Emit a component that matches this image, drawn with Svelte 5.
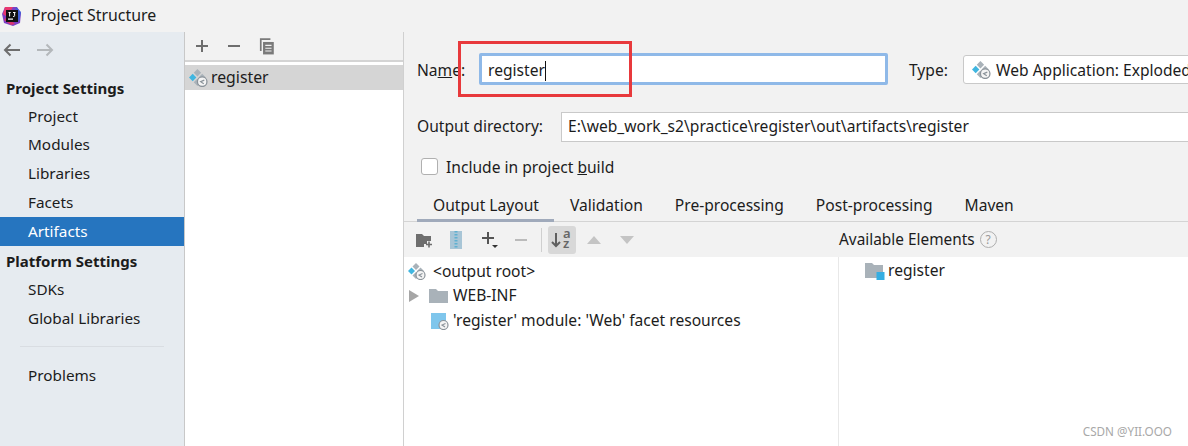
<script>
  const nav1 = ['Project', 'Modules', 'Libraries', 'Facets', 'Artifacts'];
  const nav2 = ['SDKs', 'Global Libraries'];
  const tabs = ['Output Layout', 'Validation', 'Pre-processing', 'Post-processing', 'Maven'];
</script>

{#snippet artifact(size)}
  <svg class="ico" width={size} height={size} viewBox="0 0 18 18">
    <path d="M8 1l3.5 3.5L8 8 4.500 4.500z" fill="#a9b2b9"/>
    <path d="M3.500 5.500L7 9l-3.500 3.500L0 9z" fill="#40b6e0"/>
    <path d="M8 10l3.500 3.500L8 17l-3.500-3.500z" fill="#a9b2b9"/>
    <path d="M12.500 5.500L16 9l-3.500 3.500L9 9z" fill="#a9b2b9"/>
    <circle cx="12.500" cy="13" r="4.500" fill="#f4f4f4" stroke="#8a9299" stroke-width="1.200"/>
    <path d="M14.500 11.500L11 13l3 2" fill="none" stroke="#8a9299" stroke-width="1.100"/>
  </svg>
{/snippet}

<div class="win">
  <header class="title">
    <svg class="logo" width="22" height="22" viewBox="0 0 22 22">
      <path d="M4 2h12l4 6-1 10-7 3-9-3-2-9z" fill="#7c3fc4"/>
      <path d="M2 9l2-7h8L6 12z" fill="#e9386f"/>
      <path d="M3 15l7 5 4-1-8-8z" fill="#d9336f"/>
      <path d="M15 2l5 5-2 10-4-9z" fill="#3f5fd8"/>
      <rect x="5" y="5" width="12" height="12" fill="#111"/>
      <rect x="7" y="13.500" width="5" height="1.200" fill="#fff"/>
      <path d="M7.500 7.500h2.200M8.600 7.500v4M12 7.500h2.500M13.600 7.500v3.200q0 1-1.500 .8" fill="none" stroke="#fff" stroke-width="1"/>
    </svg>
    <span class="title-text">Project Structure</span>
  </header>

  <div class="body">
    <aside class="side">
      <div class="arrows">
        <svg width="20" height="16" viewBox="0 0 20 16"><path d="M18 8H3M8.500 2.500L3 8l5.500 5.500" fill="none" stroke="#6e6e6e" stroke-width="2"/></svg>
        <svg width="20" height="16" viewBox="0 0 20 16"><path d="M2 8h15M11.500 2.500L17 8l-5.500 5.500" fill="none" stroke="#b4b8bb" stroke-width="2"/></svg>
      </div>
      <div class="head first">Project Settings</div>
      {#each nav1 as n}
        <div class="item" class:sel={n === 'Artifacts'}>{n}</div>
      {/each}
      <div class="head second">Platform Settings</div>
      {#each nav2 as n}
        <div class="item">{n}</div>
      {/each}
      <div class="sep"></div>
      <div class="item">Problems</div>
    </aside>

    <section class="list">
      <div class="list-bar">
        <svg width="16" height="16" viewBox="0 0 16 16"><path d="M8 2v12M2 8h12" stroke="#6e6e6e" stroke-width="2"/></svg>
        <svg width="16" height="16" viewBox="0 0 16 16"><path d="M2 8h12" stroke="#6e6e6e" stroke-width="2"/></svg>
        <svg class="copy" width="16" height="17" viewBox="3.500 1.500 13 15"><path d="M4.500 13V2.500H13" fill="none" stroke="#7a7a7a" stroke-width="1.500"/><path d="M6.500 5h9.500v11H6.500z" fill="#7a7a7a"/><path d="M8.500 8h5.500M8.500 10.500h5.500M8.500 13h5.500" stroke="#f2f2f2"/></svg>
      </div>
      <div class="list-row">{@render artifact(19)}<span>register</span></div>
    </section>

    <main class="main">
      <div class="row name-row">
        <label class="lbl" for="nm">Na<u>m</u>e:</label>
        <div class="name-input" id="nm">register<i class="caret"></i></div>
        <span class="lbl type-lbl">Type:</span>
        <div class="combo">{@render artifact(19)}<span>Web Application: Exploded</span></div>
      </div>
      <div class="row out-row">
        <span class="lbl">Output directory:</span>
        <div class="out-input">E:\web_work_s2\practice\register\out\artifacts\register</div>
      </div>
      <div class="row check-row">
        <span class="check"></span>
        <span class="lbl check-lbl">Include in project <u>b</u>uild</span>
      </div>
      <nav class="tabs">
        {#each tabs as t, i}
          <span class="tab" class:on={i === 0}>{t}</span>
        {/each}
      </nav>
      <div class="bar">
        <div class="bar-left">
          <svg width="18" height="18" viewBox="0 0 18 18"><path d="M1 3h6l2 2h7v5h-4v3H9v3H1z" fill="#6e6e6e"/><path d="M14 10.500v6M11 13.500h6" stroke="#6e6e6e" stroke-width="1.600"/></svg>
          <svg class="m-zip" width="14" height="20" viewBox="0 0 14 20"><rect x="1" y="1" width="12" height="18" fill="#a8c5d6"/><path d="M7 1v18" stroke="#5fb0d0" stroke-width="3" stroke-dasharray="1.500 1.500"/></svg>
          <svg class="m-plus" width="20" height="20" viewBox="0 0 20 20"><path d="M7 2v12M1 8h12" stroke="#555" stroke-width="2"/><path d="M11 15h6l-3 3z" fill="#333"/></svg>
          <svg class="m-minus" width="14" height="14" viewBox="0 0 14 14"><path d="M1 7h12" stroke="#bbb" stroke-width="2"/></svg>
          <span class="vsep"></span>
          <span class="sort">
            <svg width="20" height="20" viewBox="0 0 20 20"><path d="M8 3v13M4 12l4 4 4-4" fill="none" stroke="#5f5f5f" stroke-width="2"/></svg>
            <span class="az">a<br/>z</span>
          </span>
          <svg class="m-up" width="16" height="10" viewBox="0 0 16 10"><path d="M8 1l7 8H1z" fill="#c4c4c4"/></svg>
          <svg class="m-down" width="16" height="10" viewBox="0 0 16 10"><path d="M8 9L1 1h14z" fill="#c4c4c4"/></svg>
        </div>
        <div class="bar-right">
          <span>Available Elements</span>
          <span class="help">?</span>
        </div>
      </div>
      <div class="panes">
        <div class="tree">
          <div class="tree-row r1">{@render artifact(18)}<span>&lt;output root&gt;</span></div>
          <div class="tree-row r2">
            <svg width="10" height="12" viewBox="0 0 10 12"><path d="M0 0l10 6-10 6z" fill="#a6a6a6"/></svg>
            <svg class="fold" width="19" height="15" viewBox="0 0 19 15"><path d="M0 1h7l2 2h10v12H0z" fill="#a9b2b9"/></svg>
            <span>WEB-INF</span>
          </div>
          <div class="tree-row r3">
            <svg width="18" height="18" viewBox="0 0 18 18"><path d="M0 1h15v10l-4 6H0z" fill="#7fc6ec"/><circle cx="12.500" cy="13" r="4.500" fill="#f4f4f4" stroke="#8a9299" stroke-width="1.200"/><path d="M14.500 11.500L11 13l3 2" fill="none" stroke="#8a9299" stroke-width="1.100"/></svg>
            <span>'register' module: 'Web' facet resources</span>
          </div>
        </div>
        <div class="avail">
          <div class="avail-row">
            <svg width="20" height="18" viewBox="0 0 20 18"><path d="M0 1h7l2 2h9v13H0z" fill="#a9b2b9"/><rect x="11.500" y="10" width="8" height="8" fill="#35aee2"/></svg>
            <span>register</span>
          </div>
        </div>
      </div>
    </main>
  </div>

  <div class="redbox"></div>
  <div class="mark">CSDN @YII.OOO</div>
</div>

<style>
  :global(body) { margin: 0; background: #f2f2f2; }
  .win {
    position: relative;
    width: 1188px;
    height: 446px;
    overflow: hidden;
    display: flex;
    flex-direction: column;
    font: 15.6px/20px "Noto Sans", "Open Sans", sans-serif;
    color: #1c1c1c;
    background: #f2f2f2;
  }
  .title {
    height: 32px;
    flex: none;
    display: flex;
    align-items: center;
    gap: 8px;
    padding-left: 1px;
    box-sizing: border-box;
  }
  .title-text { font-size: 15.9px; margin-top: -2px; }
  .logo { flex: none; margin-top: -1px; }
  .body { flex: 1; display: flex; min-height: 0; }

  .side {
    width: 184px;
    flex: none;
    background: #e6ebf0;
    border-right: 1px solid #c8c8c8;
    font-size: 15.3px;
  }
  .arrows { height: 36px; display: flex; align-items: center; gap: 13px; padding: 0 0 0 2px; }
  .head { font-weight: 700; font-size: 15px; padding-left: 6px; }
  .head.first { margin-top: 6px; height: 27.6px; line-height: 29px; }
  .head.second { height: 29.6px; line-height: 31px; }
  .item { height: 28.8px; line-height: 28.8px; padding-left: 28px; }
  .item.sel { background: #2675bf; color: #fff; }
  .sep { height: 1px; background: #d9dde2; margin: 13.500px 20px; }

  .list { width: 218px; flex: none; background: #fff; border-right: 1px solid #d0d0d0; }
  .list-bar {
    height: 30px;
    background: #f2f2f2;
    border-bottom: 2px solid #d4d4d4;
    box-sizing: border-box;
    display: flex;
    align-items: center;
    gap: 16px;
    padding-left: 9px;
  }
  .copy { margin-left: 1px; }
  .list-row {
    margin-top: 3px;
    height: 25px;
    background: #d5d5d5;
    display: flex;
    align-items: center;
    gap: 3px;
    padding-left: 4px;
    font-size: 15.8px;
  }
  .list-row span { margin-top: -2px; }
  .ico { flex: none; }

  .main { flex: 1; min-width: 0; display: flex; flex-direction: column; }
  .row { display: flex; align-items: center; flex: none; }
  .lbl { white-space: nowrap; }
  .name-row { height: 32px; margin-top: 21px; padding-left: 13px; }
  .name-row .lbl { margin-top: 1px; }
  .name-row > .lbl:first-child { width: 62px; flex: none; }
  .name-input {
    width: 409px;
    height: 32px;
    flex: none;
    box-sizing: border-box;
    background: #fff;
    border: 3px solid #8fb9e8;
    border-radius: 2px;
    padding-left: 6px;
    line-height: 28px;
  }
  .caret { display: inline-block; width: 1px; height: 20px; background: #111; vertical-align: -5px; }
  .type-lbl { margin-left: 21px; width: 54px; flex: none; }
  .combo {
    flex: none;
    width: 300px;
    height: 29px;
    box-sizing: border-box;
    background: #fff;
    border: 1px solid #c9c9c9;
    border-radius: 3px;
    display: flex;
    align-items: center;
    gap: 5px;
    padding-left: 8px;
    white-space: nowrap;
  }
  .combo span { margin-top: 1px; }
  .out-row { height: 30px; margin-top: 27px; padding-left: 13px; }
  .out-row .lbl { width: 144px; flex: none; margin-top: -2px; }
  .out-input {
    width: 700px;
    flex: none;
    height: 30px;
    line-height: 26px;
    box-sizing: border-box;
    background: #fff;
    border: 1px solid #c9c9c9;
    padding-left: 6px;
    white-space: nowrap;
  }
  .check-row { height: 20px; margin-top: 14px; padding-left: 17px; gap: 8px; }
  .check { width: 17px; height: 17px; box-sizing: border-box; background: #fff; border: 1px solid #b0b0b0; border-radius: 3px; }
  .check-lbl { margin-top: 1px; }

  .tabs {
    margin-top: 13px;
    height: 33px;
    flex: none;
    box-sizing: border-box;
    border-bottom: 1px solid #d4d4d4;
    display: flex;
    padding-left: 13px;
    font-size: 15.6px;
  }
  .tab { padding: 6px 16px 0; height: 33px; box-sizing: border-box; white-space: nowrap; }
  .tab.on { border-bottom: 3px solid #a0aabb; padding-right: 15px; }

  .bar { height: 35px; flex: none; display: flex; }
  .bar-left { width: 435px; flex: none; display: flex; align-items: center; padding-left: 11px; box-sizing: border-box; }
  .m-zip { margin-left: 16px; }
  .m-plus { margin-left: 18px; }
  .m-minus { margin-left: 13px; }
  .m-up { margin-left: 10px; }
  .m-down { margin-left: 17px; }
  .vsep { width: 1px; height: 24px; background: #cfcfcf; margin: 0 6px 0 13px; }
  .sort {
    width: 28px;
    height: 28px;
    background: #d8d8d8;
    border-radius: 3px;
    display: flex;
    align-items: center;
    position: relative;
  }
  .az {
    position: absolute;
    left: 15px;
    top: 2px;
    font-size: 13px;
    line-height: 10.500px;
    font-weight: 600;
    color: #666;
  }
  .bar-right { display: flex; align-items: center; gap: 5px; white-space: nowrap; font-size: 15.4px; }
  .help {
    width: 15px;
    height: 15px;
    border: 1.500px solid #aeaeae;
    border-radius: 50%;
    color: #999;
    font-size: 12px;
    line-height: 15px;
    text-align: center;
    flex: none;
  }

  .panes { flex: 1; display: flex; background: #fff; min-height: 0; }
  .tree { width: 435px; flex: none; border-right: 1px solid #e8e8e8; box-sizing: border-box; padding-top: 1px; }
  .tree-row { display: flex; align-items: center; height: 25px; }
  .tree-row span { margin-top: -2px; }
  .r1 { padding-left: 4px; gap: 7px; }
  .tree-row.r1 span { margin-top: 0; }
  .r2 { padding-left: 5px; }
  .fold { margin-left: 10px; margin-right: 5px; }
  .r3 { padding-left: 27px; gap: 4px; }
  .avail-row { display: flex; align-items: center; gap: 3px; height: 25px; margin-top: 1px; padding-left: 26px; }
  .avail-row span { margin-top: -2px; }

  .redbox {
    position: absolute;
    left: 458px;
    top: 41px;
    width: 174px;
    height: 56px;
    box-sizing: border-box;
    border: 3px solid #e8393c;
  }
  .mark {
    position: absolute;
    right: 16px;
    bottom: 7px;
    font-size: 11.700px;
    line-height: 16px;
    color: #a8a8a8;
  }
</style>
